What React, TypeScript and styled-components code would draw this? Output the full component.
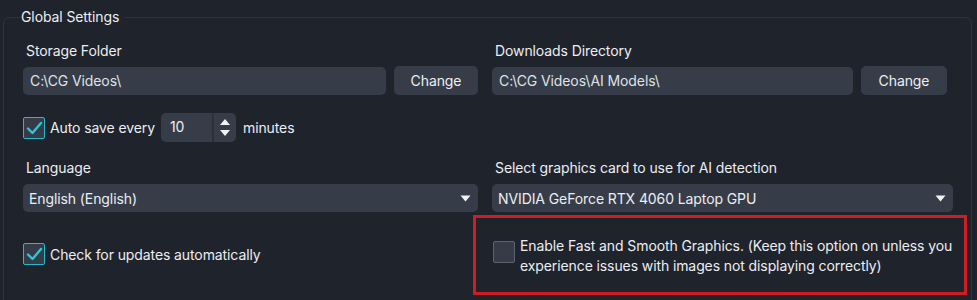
import React from "react";
import styled, { createGlobalStyle } from "styled-components";

const Global = createGlobalStyle`
  html, body { margin: 0; padding: 0; background: #1f232c; }
  body { font-family: Inter, "Noto Sans", sans-serif; color: #e9ebee; letter-spacing: -0.1px; }
  * { box-sizing: border-box; }
`;

const Page = styled.div`
  width: 977px;
  height: 300px;
  overflow: hidden;
  background: #1f232c;
  padding: 8px 5px 0 3px;
`;

const Fieldset = styled.fieldset`
  margin: 0;
  border: 1px solid #2d333e;
  border-radius: 6px;
  padding: 8px 17px 20px 19px;
  min-height: 320px;
`;

const Legend = styled.legend`
  font-size: 14px;
  line-height: 18px;
  padding: 0 6px 0 0;
  margin-left: -2px;
  color: #eceef1;
`;

const Grid = styled.div`
  display: grid;
  grid-template-columns: 455px 455px;
  column-gap: 14px;
`;

const Field = styled.div<{ $mt?: number }>`
  display: flex;
  flex-direction: column;
  margin-top: ${(p) => p.$mt ?? 0}px;
`;

const Label = styled.div`
  font-size: 14px;
  line-height: 18px;
  padding-left: 3px;
  margin-bottom: 7px;
  color: #eceef1;
`;

const InputRow = styled.div`
  display: flex;
  gap: 8px;
`;

const TextBox = styled.div`
  flex: 1;
  height: 28px;
  background: #363d49;
  border-radius: 5px;
  font-size: 14px;
  line-height: 28px;
  padding-left: 7px;
  color: #dfe2e6;
`;

const Button = styled.div<{ $w: number }>`
  width: ${(p) => p.$w}px;
  height: 29px;
  margin-top: -1px;
  background: #363d49;
  border-radius: 5px;
  font-size: 14px;
  line-height: 29px;
  text-align: center;
  color: #eceef1;
`;

const CheckRow = styled.div<{ $mt?: number }>`
  display: flex;
  align-items: center;
  gap: 5px;
  margin-top: ${(p) => p.$mt ?? 0}px;
  font-size: 14px;
  color: #eceef1;
`;

const Box = styled.div<{ $checked?: boolean }>`
  width: 22px;
  height: 22px;
  flex: none;
  border-radius: 2px;
  background: #353c48;
  border: ${(p) => (p.$checked ? "1.5px solid #25b9cc" : "1px solid #5b6370")};
  display: flex;
  align-items: center;
  justify-content: center;
`;

const Spinner = styled.div`
  display: flex;
  height: 29px;
  width: 75px;
  margin: 0 2px 0 1px;
  background: #363d49;
  border-radius: 5px;
  overflow: hidden;
`;

const SpinValue = styled.div`
  flex: 1;
  font-size: 14px;
  line-height: 27px;
  padding-left: 9px;
  border-right: 2px solid #2b313b;
`;

const SpinArrows = styled.div`
  width: 22px;
  display: flex;
  flex-direction: column;
  align-items: center;
  justify-content: center;
  gap: 5px;
`;

const Select = styled.div<{ $extend?: number }>`
  height: 28px;
  margin-right: -${(p) => p.$extend ?? 0}px;
  background: #363d49;
  border-radius: 5px;
  display: flex;
  align-items: center;
  justify-content: space-between;
  padding: 0 7px 0 6px;
  font-size: 14px;
  color: #eceef1;
`;

const Highlight = styled.div`
  margin: 3px -20px 0 -19px;
  height: 80px;
  border: 3px solid #cf1d24;
  display: flex;
  align-items: flex-start;
  padding: 23px 0 0 17px;
  gap: 5px;
`;

const HighlightText = styled.div`
  font-size: 14px;
  line-height: 20px;
  margin-top: -5px;
  white-space: nowrap;
  color: #eceef1;
`;

const Check = () => (
  <svg width="17" height="14" viewBox="0 0 17 14">
    <path d="M2 7.5 L6.5 12 L15 2" fill="none" stroke="#2cc6d9" strokeWidth="2.4" strokeLinecap="round" strokeLinejoin="round" />
  </svg>
);

const Caret = () => (
  <svg width="11" height="7" viewBox="0 0 11 7">
    <path d="M0.5 0.5 H10.5 L5.5 6.5 Z" fill="#f2f2f2" />
  </svg>
);

const Up = () => (
  <svg width="10" height="6" viewBox="0 0 10 6">
    <path d="M0 6 L5 0 L10 6 Z" fill="#f2f2f2" />
  </svg>
);
const Down = () => (
  <svg width="10" height="6" viewBox="0 0 10 6">
    <path d="M0 0 L10 0 L5 6 Z" fill="#f2f2f2" />
  </svg>
);

export default function App() {
  return (
    <Page>
      <Global />
      <Fieldset>
        <Legend>Global Settings</Legend>
        <Grid>
          <Field $mt={8}>
            <Label>Storage Folder</Label>
            <InputRow>
              <TextBox>C:\CG Videos\</TextBox>
              <Button $w={84}>Change</Button>
            </InputRow>
          </Field>
          <Field $mt={8}>
            <Label>Downloads Directory</Label>
            <InputRow>
              <TextBox>C:\CG Videos\AI Models\</TextBox>
              <Button $w={86}>Change</Button>
            </InputRow>
          </Field>
        </Grid>
        <CheckRow $mt={18}>
          <Box $checked>
            <Check />
          </Box>
          <span>Auto save every</span>
          <Spinner>
            <SpinValue>10</SpinValue>
            <SpinArrows>
              <Up />
              <Down />
            </SpinArrows>
          </Spinner>
          <span>minutes</span>
        </CheckRow>
        <Grid>
          <Field $mt={17}>
            <Label>Language</Label>
            <Select>
              <span>English (English)</span>
              <Caret />
            </Select>
          </Field>
          <Field $mt={17}>
            <Label>Select graphics card to use for AI detection</Label>
            <Select $extend={6}>
              <span>NVIDIA GeForce RTX 4060 Laptop GPU</span>
              <Caret />
            </Select>
          </Field>
          <CheckRow $mt={31} style={{ alignSelf: "start" }}>
            <Box $checked>
              <Check />
            </Box>
            <span>Check for updates automatically</span>
          </CheckRow>
          <Highlight>
            <Box />
            <HighlightText>
              Enable Fast and Smooth Graphics. (Keep this option on unless you
              <br />
              experience issues with images not displaying correctly)
            </HighlightText>
          </Highlight>
        </Grid>
      </Fieldset>
    </Page>
  );
}
